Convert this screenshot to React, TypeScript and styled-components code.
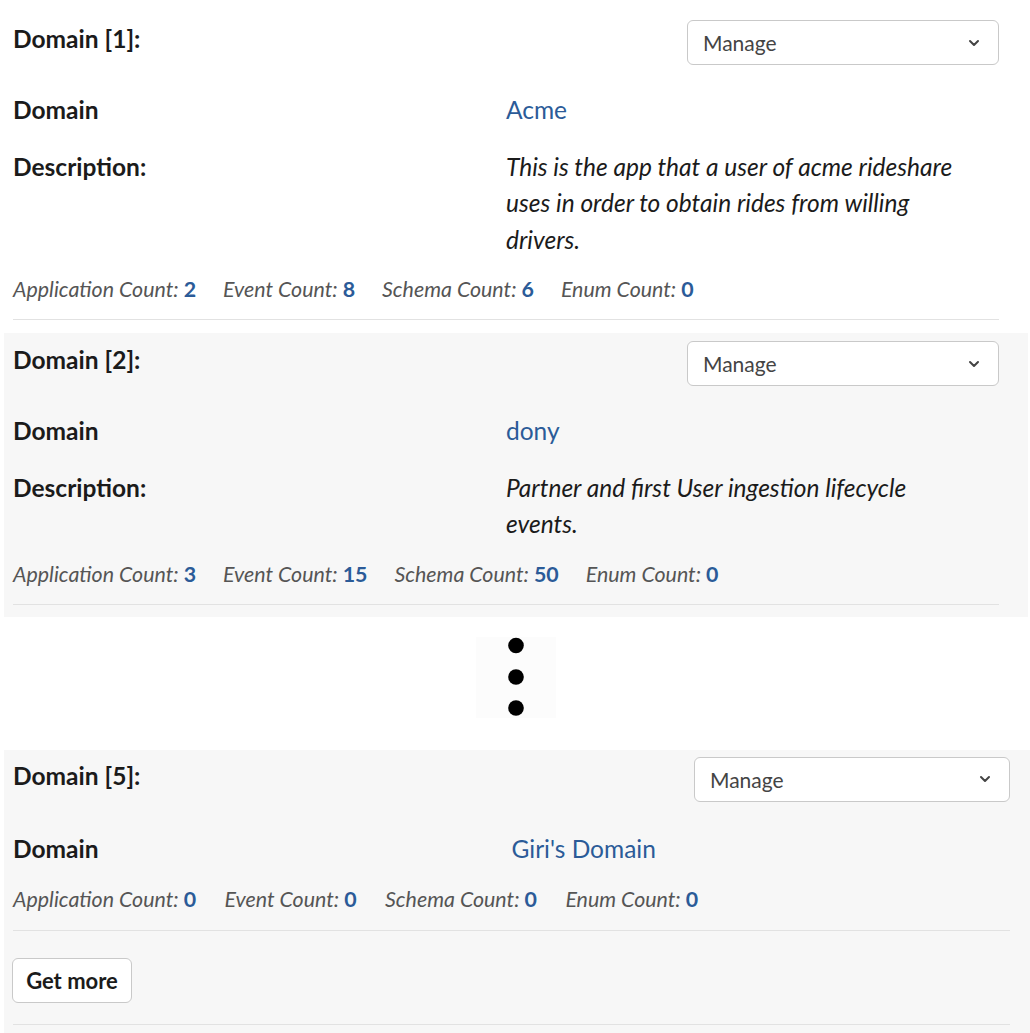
import React from 'react';
import styled, { createGlobalStyle } from 'styled-components';

const Global = createGlobalStyle`
  html, body { margin: 0; padding: 0; background: #ffffff; }
  body { font-family: Lato, "Open Sans", "Liberation Sans", sans-serif; color: #1b1b1b; }
  * { box-sizing: border-box; }
`;

const Page = styled.div`
  display: flex;
  flex-direction: column;
  width: 1030px;
`;

const Card = styled.section<{ $shaded?: boolean; $pt: number; $pr: number; $pb: number; $mt: number; $mr: number }>`
  background: ${p => (p.$shaded ? '#f7f7f7' : '#ffffff')};
  margin: ${p => p.$mt}px ${p => p.$mr}px 0 ${p => (p.$shaded ? 4 : 0)}px;
  padding: ${p => p.$pt}px ${p => p.$pr}px ${p => p.$pb}px ${p => (p.$shaded ? 9 : 13)}px;
`;

const Header = styled.div`
  display: flex;
  justify-content: space-between;
  align-items: flex-start;
`;

const Title = styled.h2`
  margin: 0;
  padding-top: 1px;
  font-size: 24.5px;
  line-height: 36px;
  font-weight: 700;
  color: #1b1b1b;
`;

const Select = styled.div<{ $loose?: boolean }>`
  width: ${p => (p.$loose ? 316 : 312)}px;
  height: 45px;
  border: 1px solid #c9c9c9;
  border-radius: 6px;
  background: #ffffff;
  display: flex;
  align-items: center;
  justify-content: space-between;
  padding: 0 18px 0 15px;
  font-size: 21px;
  color: #444444;
`;

const Fields = styled.div<{ $loose?: boolean }>`
  display: grid;
  grid-template-columns: 1fr 1fr;
  row-gap: 20px;
  margin-top: ${p => (p.$loose ? 29 : 27)}px;
`;

const Label = styled.div`
  font-size: 24.5px;
  line-height: 36px;
  font-weight: 700;
  color: #1b1b1b;
`;

const Value = styled.div<{ $desc?: boolean }>`
  font-size: 24.5px;
  line-height: 36.5px;
  font-style: ${p => (p.$desc ? 'italic' : 'normal')};
  color: ${p => (p.$desc ? '#1b1b1b' : '#2b5b98')};
  padding-right: ${p => (p.$desc ? '20px' : '0')};
`;

const Counts = styled.div<{ $loose?: boolean }>`
  display: flex;
  gap: ${p => (p.$loose ? 28.5 : 27)}px;
  margin-top: ${p => (p.$loose ? 18 : 17)}px;
  padding-bottom: ${p => (p.$loose ? 17 : 16)}px;
  border-bottom: 1px solid #e2e2e2;
  font-size: 21.4px;
  line-height: 28px;
  font-style: italic;
  color: #555555;
`;

const Num = styled.b`
  font-style: normal;
  font-weight: 700;
  color: #2b5b98;
`;

const Ellipsis = styled.div`
  align-self: center;
  margin: 20px 0 0 2px;
  width: 80px;
  height: 81px;
  background: #fcfcfc;
  display: flex;
  justify-content: center;
`;

const Footer = styled.div`
  margin-top: 27px;
  padding-bottom: 21px;
  border-bottom: 1px solid #e2e2e2;
`;

const Button = styled.button`
  width: 120px;
  height: 45px;
  margin-left: -1px;
  border: 1px solid #c9c9c9;
  border-radius: 6px;
  background: #ffffff;
  font-family: inherit;
  font-size: 22px;
  font-weight: 700;
  color: #1b1b1b;
  cursor: pointer;
`;

const Chevron = () => (
  <svg width="12" height="8" viewBox="0 0 12 8">
    <path d="M2 2 L6 6 L10 2" fill="none" stroke="#444" strokeWidth="2" strokeLinecap="round" strokeLinejoin="round" />
  </svg>
);

type Domain = {
  idx: number;
  name: string;
  desc?: string;
  counts: [number, number, number, number];
};

const CountsRow = ({ c, loose }: { c: Domain['counts']; loose?: boolean }) => (
  <Counts $loose={loose}>
    <span>Application Count: <Num>{c[0]}</Num></span>
    <span>Event Count: <Num>{c[1]}</Num></span>
    <span>Schema Count: <Num>{c[2]}</Num></span>
    <span>Enum Count: <Num>{c[3]}</Num></span>
  </Counts>
);

const Body = ({ d, loose }: { d: Domain; loose?: boolean }) => (
  <>
    <Header>
      <Title>Domain [{d.idx}]:</Title>
      <Select $loose={loose}>
        <span>Manage</span>
        <Chevron />
      </Select>
    </Header>
    <Fields $loose={loose}>
      <Label>Domain</Label>
      <Value>{d.name}</Value>
      {d.desc && (
        <>
          <Label>Description:</Label>
          <Value $desc>{d.desc}</Value>
        </>
      )}
    </Fields>
    <CountsRow c={d.counts} loose={loose} />
  </>
);

const domains: Domain[] = [
  { idx: 1, name: 'Acme', desc: 'This is the app that a user of acme rideshare uses in order to obtain rides from willing drivers.', counts: [2, 8, 6, 0] },
  { idx: 2, name: 'dony', desc: 'Partner and first User ingestion lifecycle events.', counts: [3, 15, 50, 0] },
  { idx: 5, name: "Giri's Domain", counts: [0, 0, 0, 0] },
];

export default function App() {
  return (
    <Page>
      <Global />
      <Card $pt={20} $pr={31} $pb={0} $mt={0} $mr={0}>
        <Body d={domains[0]} />
      </Card>
      <Card $shaded $pt={8} $pr={29} $pb={12} $mt={13} $mr={2}>
        <Body d={domains[1]} />
      </Card>
      <Ellipsis>
        <svg width="16" height="81" viewBox="0 0 16 81">
          <circle cx="8" cy="8.5" r="7.8" fill="#000" />
          <circle cx="8" cy="40" r="7.8" fill="#000" />
          <circle cx="8" cy="71" r="7.8" fill="#000" />
        </svg>
      </Ellipsis>
      <Card $shaded $pt={7} $pr={20} $pb={8} $mt={32} $mr={0}>
        <Body d={domains[2]} loose />
        <Footer>
          <Button>Get more</Button>
        </Footer>
      </Card>
    </Page>
  );
}
